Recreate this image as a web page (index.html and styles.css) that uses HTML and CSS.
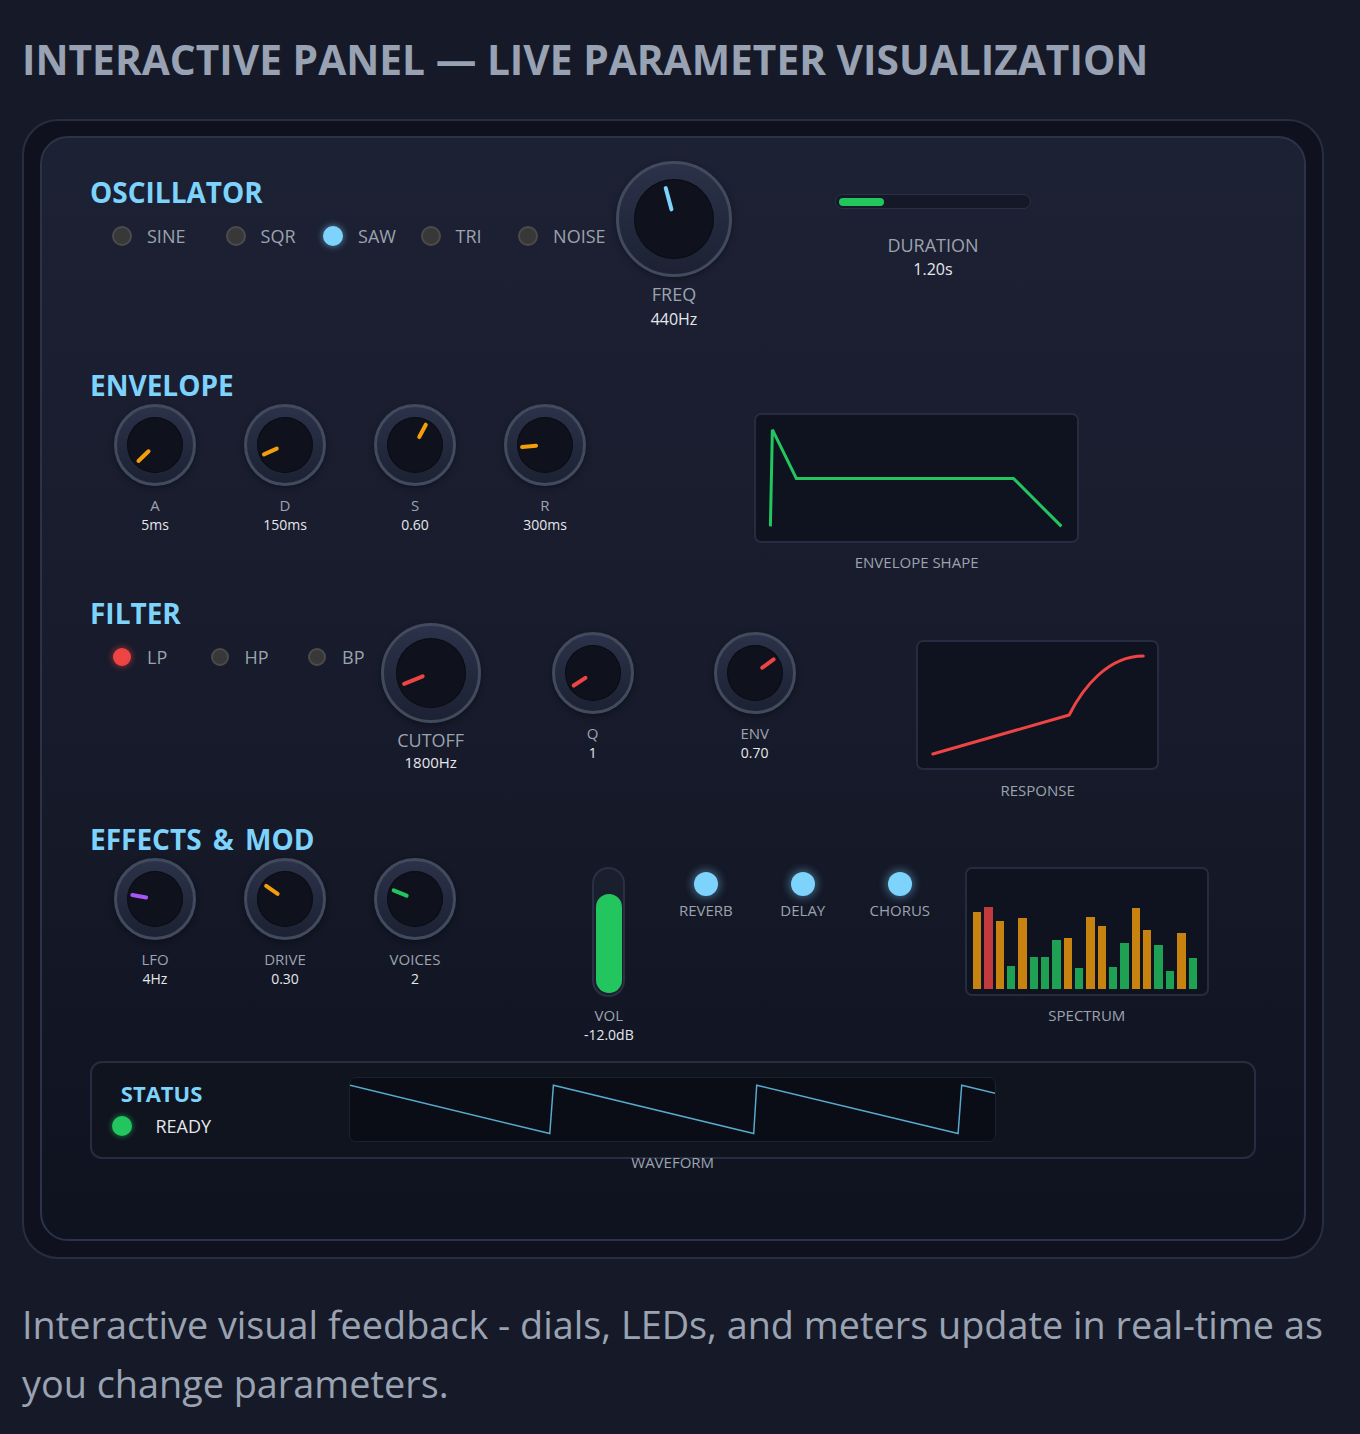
FILE: index.html
```html
<!DOCTYPE html>
<html lang="en">
<head>
<meta charset="utf-8">
<title>Interactive Panel</title>
<link rel="stylesheet" href="styles.css">
</head>
<body>
<h1 class="title">INTERACTIVE PANEL — LIVE PARAMETER VISUALIZATION</h1>
<div class="frame">
  <div class="panel">

    <section class="sec sec--osc">
      <div class="sec-main">
        <h2 class="sec-title">OSCILLATOR</h2>
        <div class="radios">
          <div class="radio radio--wide"><span class="led"></span><span>SINE</span></div>
          <div class="radio"><span class="led"></span><span>SQR</span></div>
          <div class="radio"><span class="led led--blue"></span><span>SAW</span></div>
          <div class="radio"><span class="led"></span><span>TRI</span></div>
          <div class="radio"><span class="led"></span><span>NOISE</span></div>
        </div>
      </div>
      <div class="knob-item knob-item--freq">
        <div class="knob knob--freq" style="--a:-15deg"><div class="knob-face"><span class="needle needle--blue"></span></div></div>
        <div class="knob-label">FREQ</div>
        <div class="knob-value">440Hz</div>
      </div>
      <div class="duration">
        <div class="dur-bar"><div class="dur-fill" style="width:45px"></div></div>
        <div class="dur-label">DURATION</div>
        <div class="dur-value">1.20s</div>
      </div>
    </section>

    <section class="sec sec--env">
      <h2 class="sec-title">ENVELOPE</h2>
      <div class="row row--env">
        <div class="knob-item">
          <div class="knob knob--sm" style="--a:-134deg"><div class="knob-face"><span class="needle needle--amber"></span></div></div>
          <div class="knob-label">A</div>
          <div class="knob-value">5ms</div>
        </div>
        <div class="knob-item">
          <div class="knob knob--sm" style="--a:-114deg"><div class="knob-face"><span class="needle needle--amber"></span></div></div>
          <div class="knob-label">D</div>
          <div class="knob-value">150ms</div>
        </div>
        <div class="knob-item">
          <div class="knob knob--sm" style="--a:28deg"><div class="knob-face"><span class="needle needle--amber"></span></div></div>
          <div class="knob-label">S</div>
          <div class="knob-value">0.60</div>
        </div>
        <div class="knob-item">
          <div class="knob knob--sm" style="--a:-95deg"><div class="knob-face"><span class="needle needle--amber"></span></div></div>
          <div class="knob-label">R</div>
          <div class="knob-value">300ms</div>
        </div>
        <div class="viz viz--env">
          <div class="viz-box">
            <svg viewBox="0 0 321 126" preserveAspectRatio="none">
              <polyline points="14.4,111.4 16.4,14.7 40.4,63.4 257.7,63.4 305.7,111.4" fill="none" stroke="#22c55e" stroke-width="3" stroke-linejoin="miter"/>
            </svg>
          </div>
          <div class="viz-label">ENVELOPE SHAPE</div>
        </div>
      </div>
    </section>

    <section class="sec sec--filter">
      <div class="sec-main sec-main--filter">
        <h2 class="sec-title">FILTER</h2>
        <div class="radios radios--sm">
          <div class="radio"><span class="led led--red"></span><span>LP</span></div>
          <div class="radio"><span class="led"></span><span>HP</span></div>
          <div class="radio"><span class="led"></span><span>BP</span></div>
        </div>
      </div>
      <div class="knob-item knob-item--cutoff">
        <div class="knob knob--cutoff" style="--a:-112deg"><div class="knob-face"><span class="needle needle--red"></span></div></div>
        <div class="knob-label">CUTOFF</div>
        <div class="knob-value">1800Hz</div>
      </div>
      <div class="knob-item knob-item--q">
        <div class="knob knob--sm" style="--a:-123deg"><div class="knob-face"><span class="needle needle--red"></span></div></div>
        <div class="knob-label">Q</div>
        <div class="knob-value">1</div>
      </div>
      <div class="knob-item knob-item--q">
        <div class="knob knob--sm" style="--a:54deg"><div class="knob-face"><span class="needle needle--red"></span></div></div>
        <div class="knob-label">ENV</div>
        <div class="knob-value">0.70</div>
      </div>
      <div class="viz viz--resp">
        <div class="viz-box">
          <svg viewBox="0 0 239 126" preserveAspectRatio="none">
            <path d="M14.8 112 L151 73 C165 45 190 14 225 14" fill="none" stroke="#ef4444" stroke-width="3" stroke-linecap="round" stroke-linejoin="round"/>
          </svg>
        </div>
        <div class="viz-label">RESPONSE</div>
      </div>
    </section>

    <section class="sec sec--fx">
      <h2 class="sec-title sec-title--fx">EFFECTS &amp; MOD</h2>
      <div class="row row--fx">
        <div class="knob-item">
          <div class="knob knob--sm" style="--a:-80deg"><div class="knob-face"><span class="needle needle--purple"></span></div></div>
          <div class="knob-label">LFO</div>
          <div class="knob-value">4Hz</div>
        </div>
        <div class="knob-item">
          <div class="knob knob--sm" style="--a:-55deg"><div class="knob-face"><span class="needle needle--amber"></span></div></div>
          <div class="knob-label">DRIVE</div>
          <div class="knob-value">0.30</div>
        </div>
        <div class="knob-item">
          <div class="knob knob--sm" style="--a:-68deg"><div class="knob-face"><span class="needle needle--green"></span></div></div>
          <div class="knob-label">VOICES</div>
          <div class="knob-value">2</div>
        </div>
        <div class="vol">
          <div class="vol-track"><div class="vol-fill" style="height:99px"></div></div>
          <div class="knob-label vol-label">VOL</div>
          <div class="knob-value vol-value">-12.0dB</div>
        </div>
        <div class="fx-led fx-led--first"><span class="fx-dot"></span><span class="fx-label">REVERB</span></div>
        <div class="fx-led"><span class="fx-dot"></span><span class="fx-label">DELAY</span></div>
        <div class="fx-led"><span class="fx-dot"></span><span class="fx-label">CHORUS</span></div>
        <div class="viz viz--spec">
          <div class="viz-box spec-box">
            <span class="bar bar--amber" style="height:77px"></span>
            <span class="bar bar--red" style="height:82px"></span>
            <span class="bar bar--amber" style="height:68px"></span>
            <span class="bar bar--green" style="height:23px"></span>
            <span class="bar bar--amber" style="height:71px"></span>
            <span class="bar bar--green" style="height:32px"></span>
            <span class="bar bar--green" style="height:32px"></span>
            <span class="bar bar--green" style="height:49px"></span>
            <span class="bar bar--amber" style="height:51px"></span>
            <span class="bar bar--green" style="height:21px"></span>
            <span class="bar bar--amber" style="height:72px"></span>
            <span class="bar bar--amber" style="height:63px"></span>
            <span class="bar bar--green" style="height:22px"></span>
            <span class="bar bar--green" style="height:46px"></span>
            <span class="bar bar--amber" style="height:81px"></span>
            <span class="bar bar--amber" style="height:59px"></span>
            <span class="bar bar--green" style="height:44px"></span>
            <span class="bar bar--green" style="height:18px"></span>
            <span class="bar bar--amber" style="height:56px"></span>
            <span class="bar bar--green" style="height:31px"></span>
          </div>
          <div class="viz-label">SPECTRUM</div>
        </div>
      </div>
    </section>

    <div class="status">
      <div class="status-main">
        <h3 class="status-title">STATUS</h3>
        <div class="status-row"><span class="status-led"></span><span class="status-text">READY</span></div>
      </div>
      <div class="wave">
        <div class="wave-box">
          <svg viewBox="0 0 645.5 63" preserveAspectRatio="none">
            <polyline points="0,7.3 199.8,55.6 203.4,7.3 403.7,55.6 406.7,7.3 608.1,55.6 611.7,7.3 645.5,15.4" fill="none" stroke="#58a9cc" stroke-width="1.5" stroke-linejoin="miter"/>
          </svg>
        </div>
        <div class="wave-label">WAVEFORM</div>
      </div>
    </div>

  </div>
</div>
<p class="caption">Interactive visual feedback - dials, LEDs, and meters update in real-time as you change parameters.</p>
</body>
</html>
```

FILE: styles.css
```css
html, body {
  margin: 0;
  padding: 0;
}

body {
  background: #161a28;
  padding: 0 0 0 22px;
  font-family: "Open Sans", "Noto Sans", "DejaVu Sans", sans-serif;
  color: #e5e7eb;
}

.title {
  margin: 35px 0 0;
  font-size: 40.7px;
  line-height: 48px;
  font-weight: 700;
  color: #98a2b3;
  letter-spacing: 0;
  white-space: nowrap;
}

.frame {
  box-sizing: border-box;
  width: 1302px;
  margin-top: 36px;
  border: 2px solid #282e42;
  border-radius: 36px;
  background: #0f121e;
  padding: 15px 16px 16px;
}

.panel {
  border: 2px solid #2c3349;
  border-radius: 28px;
  background: linear-gradient(180deg, #1d2134 0%, #171b2b 50%, #0f1320 100%);
  padding: 37px 48px 80px;
}

.sec-title {
  margin: 0;
  font-size: 28px;
  line-height: 34px;
  font-weight: 700;
  color: #7dd3fc;
  white-space: nowrap;
}

.sec-title--fx {
  word-spacing: 4px;
}

.sec {
  display: flex;
}

.sec--osc,
.sec--filter {
  align-items: flex-start;
}

.sec--env,
.sec--fx {
  flex-direction: column;
}

.sec--env { margin-top: 38px; }
.sec--filter { margin-top: 23.25px; }
.sec--fx { margin-top: 22.45px; }

.row {
  display: flex;
  align-items: flex-start;
}

.row--env { margin-top: 2.8px; }
.row--fx { margin-top: 1.85px; }

.sec-main {
  flex: none;
  width: 526px;
}

.sec-main--filter {
  width: 275.7px;
}

/* radios */
.radios {
  display: flex;
  margin-top: 15px;
  padding-left: 22px;
}

.radio {
  flex: none;
  width: 97.5px;
  display: flex;
  align-items: center;
  gap: 15px;
  font-size: 18px;
  line-height: 24px;
  color: #9ca3af;
}

.radio--wide {
  width: 113.6px;
}

.led {
  flex: none;
  box-sizing: border-box;
  width: 20px;
  height: 20px;
  border-radius: 50%;
  background: #383838;
  border: 2px solid #4b4b4b;
}

.radios--sm .led {
  width: 18px;
  height: 18px;
  margin: 0 1px;
}

.led--blue {
  background: #7dd3fc;
  border-color: #7dd3fc;
  box-shadow: 0 0 6px 1px rgba(125, 211, 252, 0.45);
}

.led--red {
  background: #ef4444;
  border-color: #ef4444;
  box-shadow: 0 0 6px 1px rgba(239, 68, 68, 0.5);
}

/* knobs */
.knob-item {
  flex: none;
  width: 130px;
  display: flex;
  flex-direction: column;
  align-items: center;
}

.knob {
  box-sizing: border-box;
  border-radius: 50%;
  border: 3px solid #424a5d;
  background: linear-gradient(180deg, #2b3249 0%, #1c2233 100%);
  display: flex;
  align-items: center;
  justify-content: center;
  box-shadow: 0 2px 6px rgba(0, 0, 0, 0.35);
}

.knob-face {
  position: relative;
  border-radius: 50%;
  background: #0f121d;
  box-shadow: inset 0 0 0 1px rgba(0, 0, 0, 0.35);
}

.knob--sm { width: 82px; height: 82px; }
.knob--sm .knob-face { width: 56px; height: 56px; }

.knob--freq { width: 116px; height: 116px; }
.knob--freq .knob-face { width: 80px; height: 80px; }

.knob--cutoff { width: 100px; height: 100px; }
.knob--cutoff .knob-face { width: 70px; height: 70px; }

.needle {
  position: absolute;
  inset: 0;
  transform: rotate(var(--a));
}

.needle::after {
  content: "";
  position: absolute;
  left: 50%;
  top: 2.5px;
  width: 3.5px;
  height: 18.5px;
  margin-left: -1.75px;
  border-radius: 2px;
  background: currentColor;
}

.knob--freq .needle::after {
  top: 6px;
  height: 26px;
  width: 4px;
  margin-left: -2px;
}

.knob--cutoff .needle::after {
  top: 4px;
  height: 24px;
  width: 4.5px;
  margin-left: -2.25px;
}

.needle--blue { color: #7dd3fc; }
.needle--amber { color: #f59e0b; }
.needle--red { color: #ef4444; }
.needle--purple { color: #a855f7; }
.needle--green { color: #22c55e; }

.knob-label {
  margin-top: 9px;
  font-size: 15px;
  line-height: 20px;
  color: #9ca3af;
  white-space: nowrap;
}

.knob-value {
  font-size: 14px;
  line-height: 19px;
  color: #e5e7eb;
  white-space: nowrap;
}

.knob-item--freq {
  width: 116px;
  margin-top: -14px;
}

.knob-item--freq .knob-label {
  margin-top: 5px;
  font-size: 18px;
  line-height: 24px;
}

.knob-item--freq .knob-value {
  margin-top: 1.5px;
  font-size: 16px;
  line-height: 22px;
}

.knob-item--cutoff {
  margin-top: 27px;
}

.knob-item--cutoff .knob-label {
  margin-top: 5px;
  font-size: 18px;
  line-height: 24px;
}

.knob-item--cutoff .knob-value {
  font-size: 15px;
  line-height: 20px;
}

.knob-item--q {
  margin-top: 36px;
  margin-left: 32px;
}

/* duration */
.duration {
  flex: none;
  width: 196px;
  margin-left: 103px;
  margin-top: 19.3px;
  display: flex;
  flex-direction: column;
  align-items: center;
}

.dur-bar {
  box-sizing: border-box;
  width: 100%;
  height: 15px;
  border: 1.5px solid #2b3145;
  border-radius: 8px;
  background: #141827;
  padding: 2.5px 3px;
}

.dur-fill {
  height: 100%;
  border-radius: 4px;
  background: #22c55e;
}

.dur-label {
  margin-top: 24px;
  font-size: 18px;
  line-height: 24px;
  color: #9ca3af;
}

.dur-value {
  margin-top: 1px;
  font-size: 16px;
  line-height: 22px;
  color: #e5e7eb;
}

/* visualisation boxes */
.viz {
  flex: none;
  display: flex;
  flex-direction: column;
  align-items: center;
}

.viz-box {
  box-sizing: border-box;
  width: 100%;
  height: 130px;
  border: 2px solid #262c3f;
  border-radius: 7px;
  background: #0f1320;
}

.viz-box svg {
  display: block;
  width: 100%;
  height: 100%;
}

.viz-label {
  margin-top: 9px;
  font-size: 15px;
  line-height: 20px;
  color: #9ca3af;
  white-space: nowrap;
}

.viz--env {
  width: 324.7px;
  margin-left: 144.3px;
  margin-top: 9px;
}

.viz--resp {
  width: 243.3px;
  margin-left: 96.4px;
  margin-top: 44.25px;
}

.viz--resp .viz-label {
  margin-top: 10px;
}

.viz--spec {
  width: 243.7px;
  margin-left: 16.7px;
  margin-top: 9px;
}

.viz--spec .viz-box {
  height: 129.4px;
}

.spec-box {
  display: flex;
  align-items: flex-end;
  gap: 3px;
  padding: 0 9.7px 5.7px 6px;
}

.bar {
  flex: 1;
  display: block;
}

.bar--amber { background: #c7820f; }
.bar--red { background: #c33a3e; }
.bar--green { background: #1ea152; }

/* volume */
.vol {
  flex: none;
  width: 60px;
  margin-left: 98.8px;
  margin-top: 9px;
  display: flex;
  flex-direction: column;
  align-items: center;
}

.vol-track {
  box-sizing: border-box;
  width: 33px;
  height: 130px;
  border: 2px solid #2a3044;
  border-radius: 17px;
  background: #1a1f2d;
  padding: 1.7px;
  display: flex;
  flex-direction: column;
  justify-content: flex-end;
}

.vol-fill {
  border-radius: 13px;
  background: #22c55e;
}

.vol-label {
  margin-top: 8.4px;
}

.vol-value {
  line-height: 20px;
}

/* fx leds */
.fx-led {
  flex: none;
  width: 97px;
  margin-top: 13.5px;
  display: flex;
  flex-direction: column;
  align-items: center;
}

.fx-led--first {
  margin-left: 18.5px;
}

.fx-dot {
  width: 24px;
  height: 24px;
  border-radius: 50%;
  background: #7dd3fc;
  box-shadow: 0 0 8px 2px rgba(125, 211, 252, 0.4);
}

.fx-label {
  margin-top: 4.9px;
  font-size: 15px;
  line-height: 20px;
  color: #9ca3af;
}

/* status */
.status {
  box-sizing: border-box;
  height: 97.3px;
  margin-top: 16px;
  border: 2px solid #272d40;
  border-radius: 12px;
  background: #10141f;
  padding: 14px 20px 0;
  display: flex;
  align-items: flex-start;
}

.status-main {
  flex: none;
  margin-top: 2px;
  display: flex;
  flex-direction: column;
  align-items: center;
}

.status-title {
  margin: 0;
  font-size: 22px;
  line-height: 28px;
  font-weight: 700;
  color: #7dd3fc;
}

.status-row {
  margin-top: 6.7px;
  display: flex;
  align-items: center;
  gap: 23.5px;
}

.status-led {
  width: 20px;
  height: 20px;
  border-radius: 50%;
  background: #22c55e;
  box-shadow: 0 0 5px 1px rgba(34, 197, 94, 0.45);
}

.status-text {
  font-size: 18px;
  line-height: 24px;
  color: #e5e7eb;
}

.wave {
  flex: none;
  margin-left: 137.8px;
  display: flex;
  flex-direction: column;
  align-items: center;
}

.wave-box {
  box-sizing: border-box;
  width: 647.5px;
  height: 65px;
  border: 1px solid #1c2130;
  border-radius: 7px;
  background: #0a0d15;
  overflow: hidden;
}

.wave-box svg {
  display: block;
  width: 100%;
  height: 100%;
}

.wave-label {
  margin-top: 9.6px;
  font-size: 15px;
  line-height: 20px;
  color: #9ca3af;
}

/* caption */
.caption {
  width: 1302px;
  margin: 36.5px 0 0;
  font-size: 37.8px;
  line-height: 59px;
  color: #9aa3b2;
}
```
